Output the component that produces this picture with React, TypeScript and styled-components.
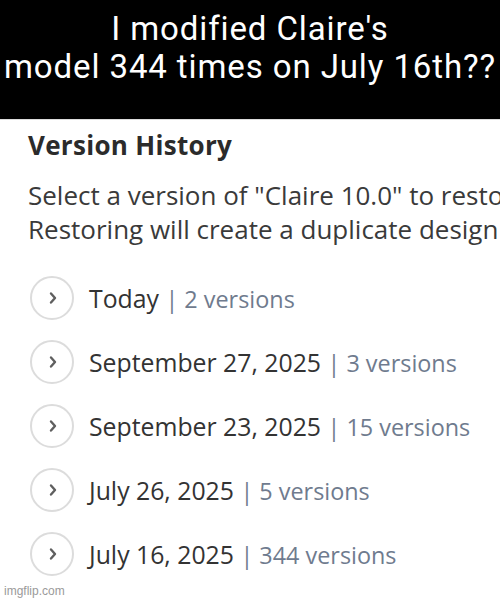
import styled, { createGlobalStyle } from 'styled-components';

const GlobalStyle = createGlobalStyle`
  html, body {
    margin: 0;
    padding: 0;
    background: #fff;
  }
`;

const Page = styled.div`
  position: relative;
  width: 500px;
  height: 600px;
  overflow: hidden;
  background: #fff;
`;

const Caption = styled.header`
  height: 120px;
  background: #000;
  color: #fff;
  font-family: Roboto, 'Liberation Sans', sans-serif;
  font-size: 33px;
  letter-spacing: 0.9px;
  line-height: 38px;
  text-align: center;
  padding-top: 10px;
  box-sizing: border-box;
  border-bottom: 1px solid #dcdcdc;
  white-space: nowrap;
`;

const Panel = styled.section`
  padding: 7px 0 0 28px;
  font-family: 'Open Sans', 'Noto Sans', sans-serif;
  color: #333;
  white-space: nowrap;
  overflow: hidden;
`;

const Title = styled.h2`
  margin: 0;
  font-size: 26px;
  font-weight: 700;
  letter-spacing: 0.3px;
  line-height: 36px;
  color: #2b2b2b;
`;

const Intro = styled.p`
  margin: 15px 0 0;
  font-size: 26px;
  line-height: 34px;
  color: #3a3a3a;
`;

const List = styled.ul`
  list-style: none;
  margin: 30px 0 0;
  padding: 0;
  display: flex;
  flex-direction: column;
  gap: 20px;
`;

const Row = styled.li`
  display: flex;
  align-items: center;
  gap: 15px;
  height: 44px;
`;

const Circle = styled.span`
  width: 44px;
  height: 44px;
  border: 2px solid #dcdcdc;
  border-radius: 50%;
  box-sizing: border-box;
  display: flex;
  align-items: center;
  justify-content: center;
  margin-left: 2px;
  flex-shrink: 0;
  svg {
    display: block;
    margin-left: 2px;
  }
`;

const Label = styled.span`
  font-size: 24.8px;
  color: #333;
`;

const Count = styled.span`
  font-size: 23.4px;
  color: #6f7b8e;
`;

const Watermark = styled.div`
  position: absolute;
  left: 4px;
  bottom: 2px;
  font-family: 'Liberation Sans', sans-serif;
  font-size: 12px;
  color: #9a9a9a;
`;

const Chevron = () => (
  <svg width="10" height="14" viewBox="0 0 10 14">
    <path d="M3 2.5 L7 7 L3 11.5" fill="none" stroke="#5f5f5f" strokeWidth="2.4" strokeLinecap="round" strokeLinejoin="round" />
  </svg>
);

const versions = [
  { date: 'Today', count: 2 },
  { date: 'September 27, 2025', count: 3 },
  { date: 'September 23, 2025', count: 15 },
  { date: 'July 26, 2025', count: 5 },
  { date: 'July 16, 2025', count: 344 },
];

const App = () => {
  return (
    <Page>
      <GlobalStyle />
      <Caption>
        I modified Claire's
        <br />
        model 344 times on July 16th??
      </Caption>
      <Panel>
        <Title>Version History</Title>
        <Intro>
          Select a version of "Claire 10.0" to resto
          <br />
          Restoring will create a duplicate design
        </Intro>
        <List>
          {versions.map((v) => (
            <Row key={v.date}>
              <Circle>
                <Chevron />
              </Circle>
              <Label>
                {v.date} <Count>| {v.count} versions</Count>
              </Label>
            </Row>
          ))}
        </List>
      </Panel>
      <Watermark>imgflip.com</Watermark>
    </Page>
  );
};

export default App;
